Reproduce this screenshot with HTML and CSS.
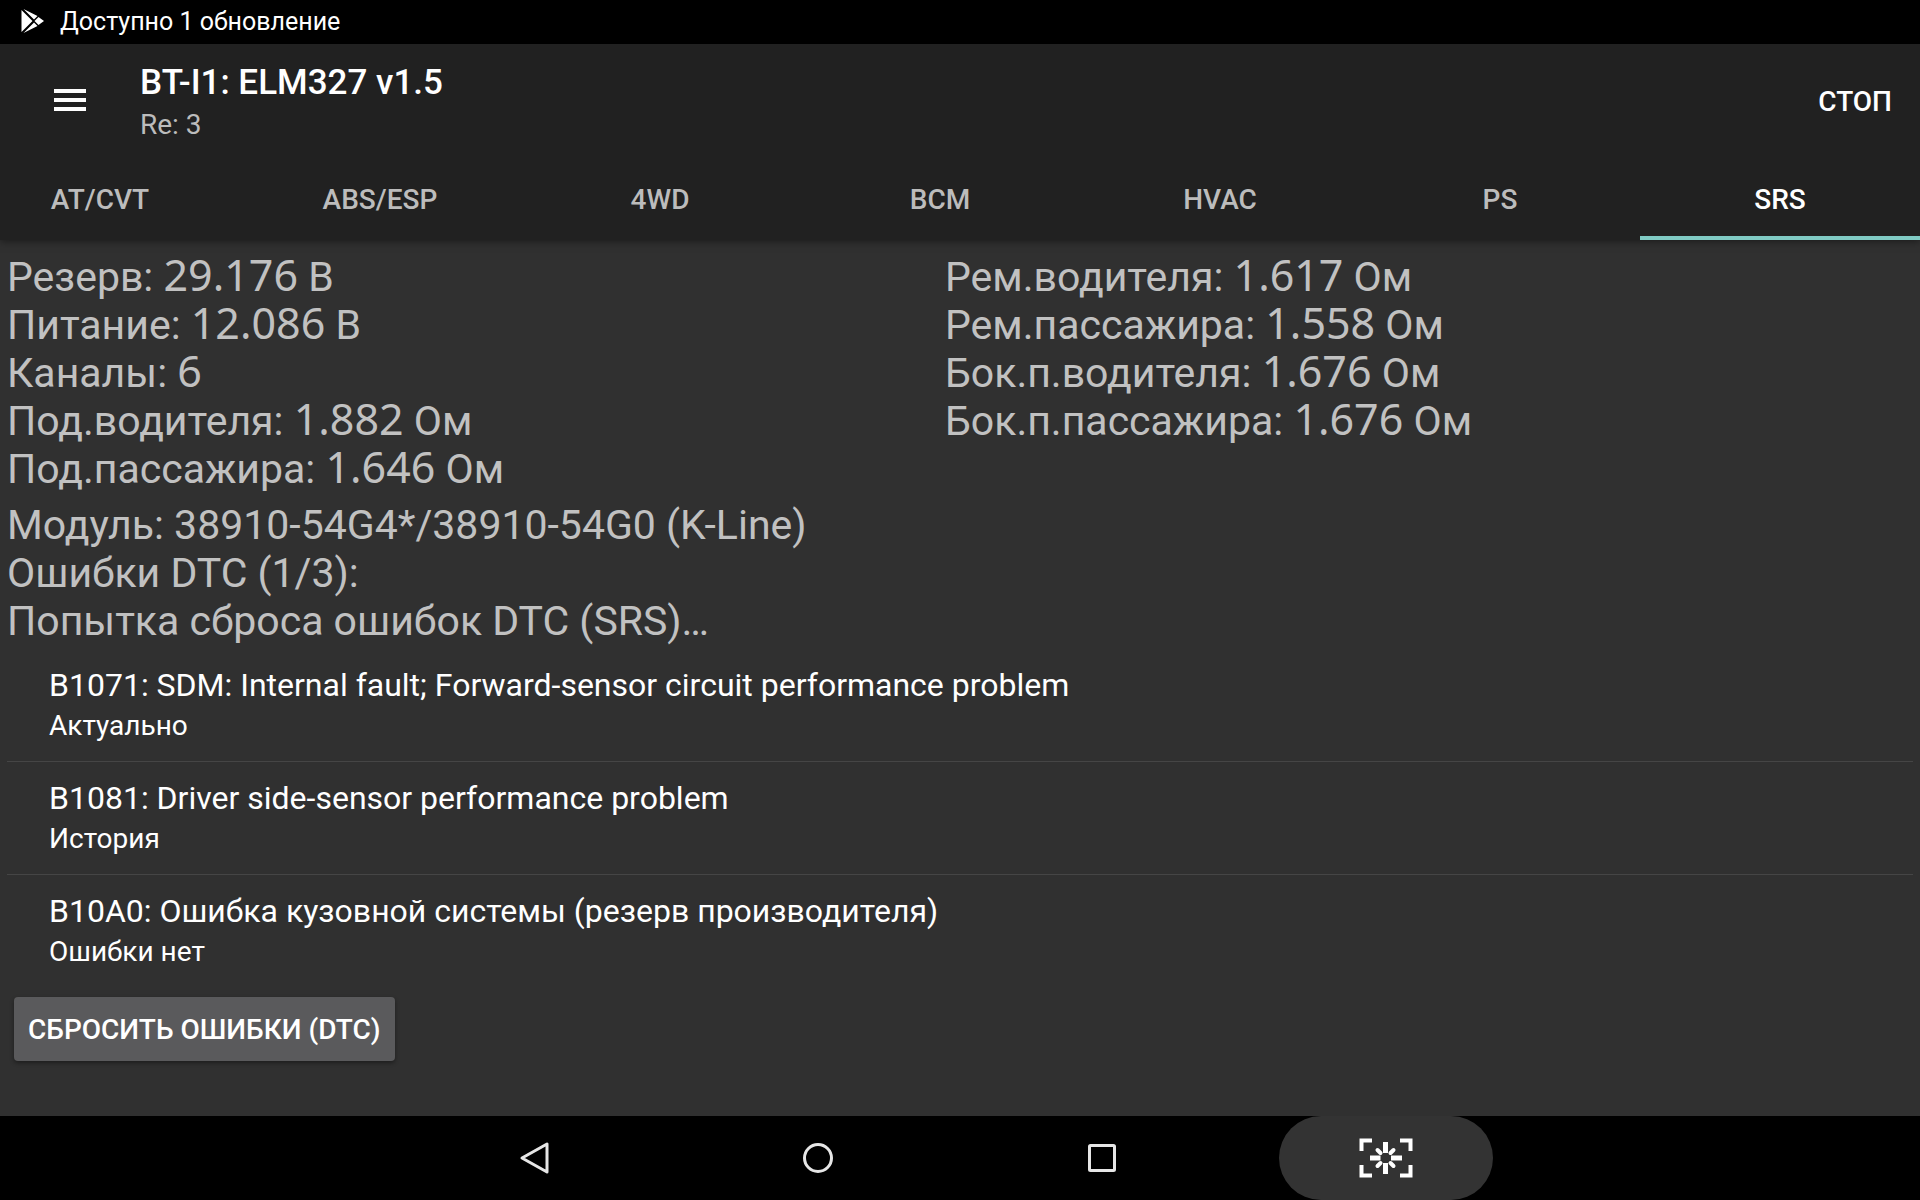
FILE: index.html
```html
<!DOCTYPE html>
<html lang="ru">
<head>
<meta charset="utf-8">
<meta name="viewport" content="width=device-width, initial-scale=1">
<title>ELM327</title>
<link rel="stylesheet" href="styles.css">
</head>
<body>
<div class="status-bar">
  <svg class="play-icon" viewBox="0 0 24 26" aria-hidden="true">
    <path fill="#fff" d="M1 2v22l11-11zM3 1l10.500 10.500 3.500-3.500zM3 25l10.500-10.500 3.500 3.500zM18 9l-4 4 4 4 5.500-4z"/>
  </svg>
  <span>Доступно 1 обновление</span>
</div>
<header class="app-bar">
  <div class="toolbar">
    <button class="menu-button" type="button" aria-label="Меню">
      <svg viewBox="0 0 32 22" aria-hidden="true"><path fill="#fff" d="M0 0h32v4H0zM0 9h32v4H0zM0 18h32v4H0z"/></svg>
    </button>
    <div class="titles">
      <h1 class="title">BT-I1: ELM327 v1.5</h1>
      <p class="subtitle">Re: 3</p>
    </div>
    <button class="stop-button" type="button">СТОП</button>
  </div>
  <nav class="tabs">
    <a class="tab" href="#at">AT/CVT</a>
    <a class="tab" href="#abs">ABS/ESP</a>
    <a class="tab" href="#4wd">4WD</a>
    <a class="tab" href="#bcm">BCM</a>
    <a class="tab" href="#hvac">HVAC</a>
    <a class="tab" href="#ps">PS</a>
    <a class="tab tab-active" href="#srs" aria-current="page">SRS</a>
  </nav>
</header>
<main class="content">
  <section class="readings">
    <div class="column">
      <p>Резерв: <span class="value">29.176</span> В</p>
      <p>Питание: <span class="value">12.086</span> В</p>
      <p>Каналы: <span class="value">6</span></p>
      <p>Под.водителя: <span class="value">1.882</span> Ом</p>
      <p>Под.пассажира: <span class="value">1.646</span> Ом</p>
    </div>
    <div class="column">
      <p>Рем.водителя: <span class="value">1.617</span> Ом</p>
      <p>Рем.пассажира: <span class="value">1.558</span> Ом</p>
      <p>Бок.п.водителя: <span class="value">1.676</span> Ом</p>
      <p>Бок.п.пассажира: <span class="value">1.676</span> Ом</p>
    </div>
  </section>
  <section class="module">
    <p>Модуль: 38910-54G4*/38910-54G0 (K-Line)</p>
    <p>Ошибки DTC (1/3):</p>
    <p>Попытка сброса ошибок DTC (SRS)…</p>
  </section>
  <ul class="faults">
    <li class="fault">
      <p class="fault-name">B1071: SDM: Internal fault; Forward-sensor circuit performance problem</p>
      <p class="fault-state">Актуально</p>
    </li>
    <li class="fault">
      <p class="fault-name">B1081: Driver side-sensor performance problem</p>
      <p class="fault-state">История</p>
    </li>
    <li class="fault">
      <p class="fault-name">B10A0: Ошибка кузовной системы (резерв производителя)</p>
      <p class="fault-state">Ошибки нет</p>
    </li>
  </ul>
  <button class="reset-button" type="button">СБРОСИТЬ ОШИБКИ (DTC)</button>
</main>
<footer class="nav-bar">
  <button class="nav-button" type="button" aria-label="Назад">
    <svg width="36" height="36" viewBox="0 0 36 36" aria-hidden="true"><path d="M31 4v28L6 18z" fill="none" stroke="#e6e6e6" stroke-width="3" stroke-linejoin="round"/></svg>
  </button>
  <button class="nav-button" type="button" aria-label="Домой">
    <svg width="36" height="36" viewBox="0 0 36 36" aria-hidden="true"><circle cx="18" cy="18" r="13.500" fill="none" stroke="#e6e6e6" stroke-width="3"/></svg>
  </button>
  <button class="nav-button" type="button" aria-label="Обзор">
    <svg width="36" height="36" viewBox="0 0 36 36" aria-hidden="true"><rect x="5.500" y="5.500" width="25" height="25" rx="1" fill="none" stroke="#e6e6e6" stroke-width="3"/></svg>
  </button>
  <button class="nav-button nav-pressed" type="button" aria-label="Снимок экрана">
    <svg width="54" height="40" viewBox="0 0 54 40" aria-hidden="true">
      <path d="M13 2.500H2.500V13M41 2.500h10.500V13M13 37.500H2.500V27M41 37.500h10.500V27" fill="none" stroke="#fff" stroke-width="4"/>
      <path d="M26.500 4v11M26.500 25v11M11 20h10.500M32 20h11" fill="none" stroke="#fff" stroke-width="5"/>
      <path d="M18.500 12l3 3M34.500 12L31.500 15M18.500 28l3-3M34.500 28L31.500 25" fill="none" stroke="#fff" stroke-width="4" stroke-linecap="round"/>
    </svg>
  </button>
</footer>
</body>
</html>
```
FILE: styles.css
```css
* { box-sizing: border-box; }

body {
  margin: 0;
  min-height: 100vh;
  display: flex;
  flex-direction: column;
  background: #303030;
  color: #fff;
  font-family: Roboto, sans-serif;
}

p, h1, ul { margin: 0; padding: 0; }

button {
  border: 0;
  padding: 0;
  background: none;
  color: inherit;
  font: inherit;
}

.status-bar {
  display: flex;
  align-items: center;
  gap: 15px;
  height: 44px;
  padding: 0 20px;
  background: #000;
  font-size: 25px;
  line-height: 46px;
}

.play-icon { width: 25px; height: 26px; margin-bottom: 2px; }

.app-bar {
  position: relative;
  background: #212121;
  box-shadow: 0 1px 8px rgba(0, 0, 0, 0.5);
}

.toolbar {
  display: flex;
  align-items: center;
  height: 112px;
  padding: 0 28px 0 54px;
}

.menu-button { width: 32px; height: 22px; }
.menu-button svg { display: block; width: 32px; height: 22px; }

.titles { flex: 1; padding: 8px 0 0 54px; }

.title {
  font-size: 35px;
  font-weight: 500;
  line-height: 42px;
}

.subtitle {
  font-size: 28px;
  line-height: 42px;
  color: #bcbcbc;
}

.stop-button { padding-top: 2px; font-size: 28px; font-weight: 500; }

/* The strip is scrolled to its end, so the first tab is partly cut off. */
.tabs {
  display: flex;
  justify-content: flex-end;
  overflow: hidden;
}

.tab {
  flex: 0 0 280px;
  padding-top: 8px;
  height: 84px;
  border-bottom: 4px solid transparent;
  text-align: center;
  font-size: 28px;
  font-weight: 500;
  line-height: 72px;
  color: #bcbcbc;
  text-decoration: none;
}

.tab-active { color: #fff; border-bottom-color: #80cbc4; }

.content {
  flex: 1;
  padding: 8px 7px 0;
}

.readings {
  display: grid;
  grid-template-columns: 1fr 1fr;
  padding: 5px 0 8px;
}

.column + .column { margin-left: -15px; }

.readings, .module {
  font-size: 41px;
  line-height: 48px;
  color: #c1c1c1;
}

.value {
  font-family: "Noto Sans", sans-serif;
  font-size: 43px;
  line-height: 40px;
}

.faults { list-style: none; padding-top: 4px; }

.fault { padding: 14px 42px 16px; }
.fault + .fault { border-top: 1px solid #454545; }

.fault-name { font-size: 32px; line-height: 44px; }
.fault-state { font-size: 28px; line-height: 38px; }

.reset-button {
  display: block;
  height: 64px;
  margin: 10px 7px;
  padding: 0 14px;
  border-radius: 4px;
  background: #5a5a5c;
  box-shadow: 0 2px 4px rgba(0, 0, 0, 0.4);
  font-size: 28px;
  font-weight: 500;
}

.nav-bar {
  display: flex;
  justify-content: center;
  gap: 70px;
  height: 84px;
  background: #000;
}

.nav-button {
  display: grid;
  place-items: center;
  width: 214px;
  height: 84px;
  border-radius: 42px;
}

.nav-pressed { background: #333; }
```
